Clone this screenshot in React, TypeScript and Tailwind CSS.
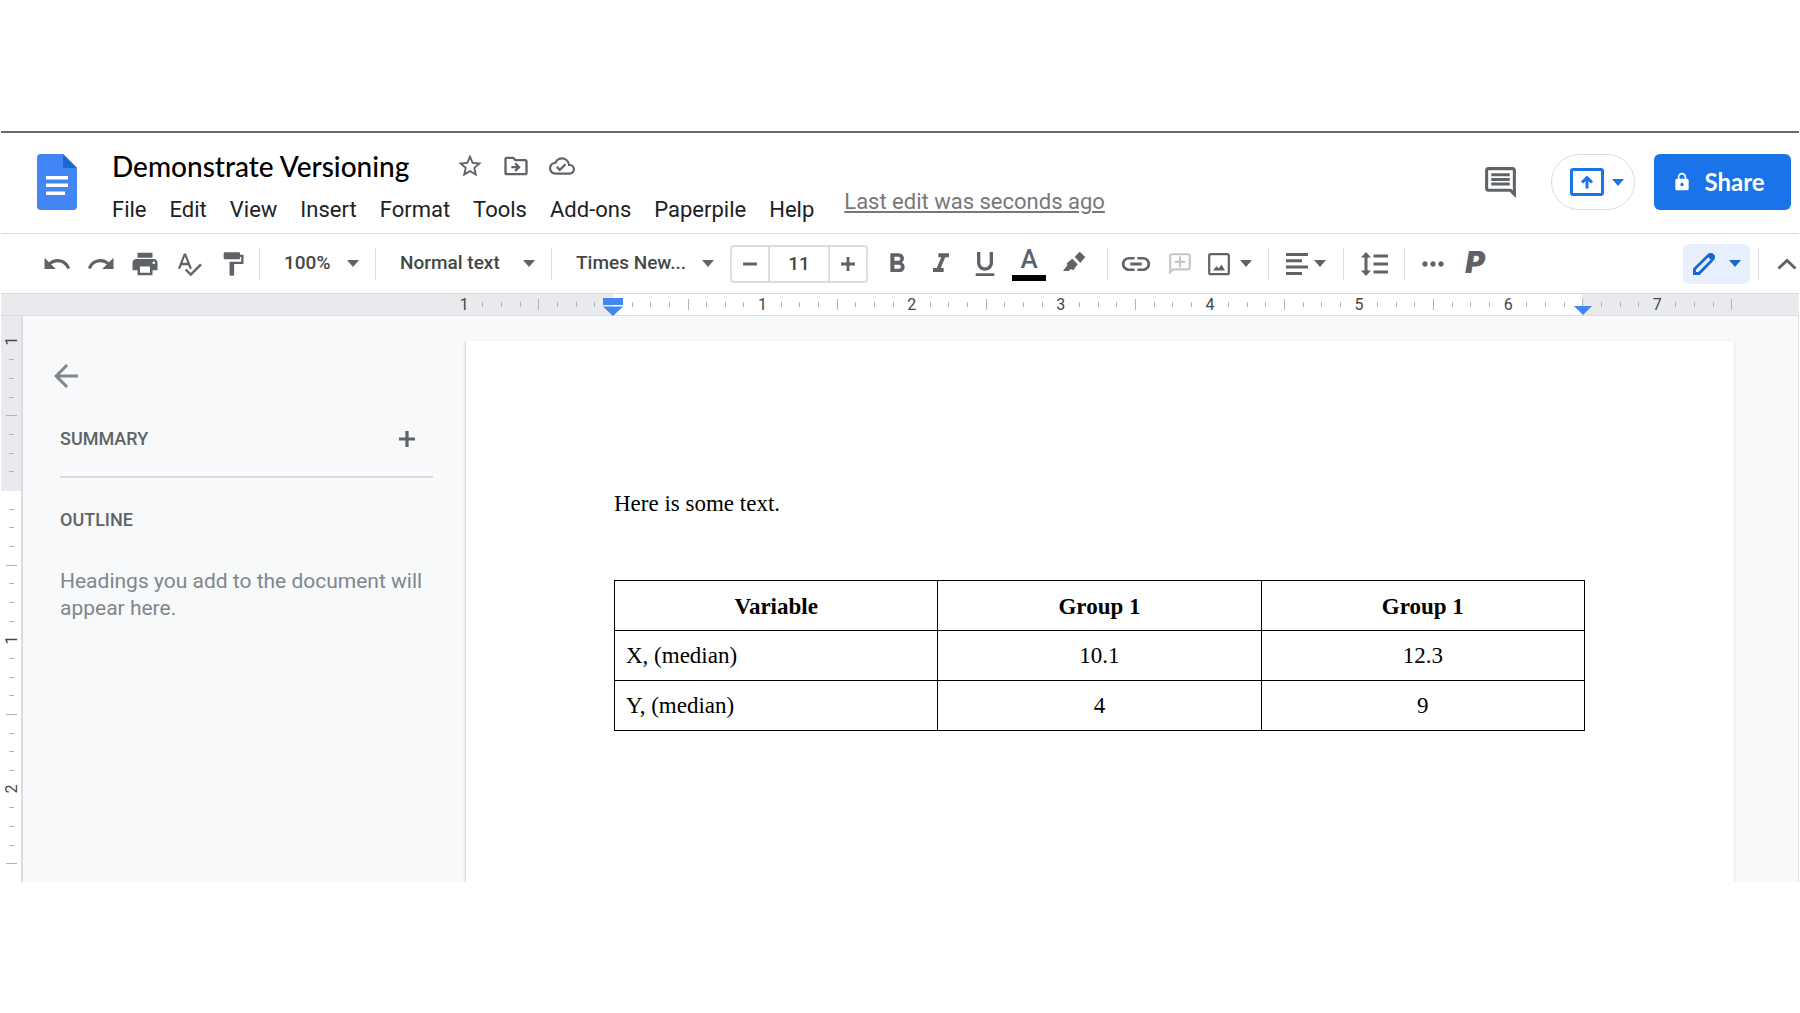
import type { ReactNode, SVGProps } from 'react';
import {
    MdArrowBack,
    MdFormatBold,
    MdFormatItalic,
    MdFormatPaint,
    MdFormatUnderlined,
    MdLink,
    MdLock,
    MdMoreHoriz,
    MdOutlineAddComment,
    MdOutlineCloudDone,
    MdOutlineComment,
    MdOutlineDriveFileMove,
    MdPrint,
    MdRedo,
    MdSpellcheck,
    MdStarBorder,
    MdUndo,
} from 'react-icons/md';

const menus = [
    'File',
    'Edit',
    'View',
    'Insert',
    'Format',
    'Tools',
    'Add-ons',
    'Paperpile',
    'Help',
];

const rows = [
    { variable: 'X, (median)', first: '10.1', second: '12.3' },
    { variable: 'Y, (median)', first: '4', second: '9' },
];

function Caret(props: SVGProps<SVGSVGElement>) {
    return (
        <svg width="12" height="7" viewBox="0 0 12 7" fill="currentColor" {...props}>
            <path d="M0 0h12L6 7z" />
        </svg>
    );
}

function Minus() {
    return (
        <svg width="14" height="14" viewBox="0 0 14 14" fill="currentColor">
            <path d="M0 5.500h14v3H0z" />
        </svg>
    );
}

function Plus({ size = 14 }: { size?: number }) {
    return (
        <svg width={size} height={size} viewBox="0 0 14 14" fill="currentColor">
            <path d="M5.600 0h2.800v5.600H14v2.800H8.400V14H5.600V8.400H0V5.600h5.600z" />
        </svg>
    );
}

function DocsLogo() {
    return (
        <svg width="40" height="56" viewBox="0 0 40 56">
            <path
                d="M4 0h22l14 14v38a4 4 0 0 1-4 4H4a4 4 0 0 1-4-4V4a4 4 0 0 1 4-4z"
                fill="#4285f4"
            />
            <path d="M26 0l14 14H26z" fill="#1967d2" />
            <path
                d="M9 22h22v3.500H9zM9 29.500h22V33H9zM9 37.500h19V41H9z"
                fill="#fff"
            />
        </svg>
    );
}

function Divider() {
    return <div className="mx-1 h-8 w-px shrink-0 bg-[#dadce0]" />;
}

function ToolButton({
    label,
    children,
    className = 'w-11',
}: {
    label: string;
    children: ReactNode;
    className?: string;
}) {
    return (
        <button
            type="button"
            aria-label={label}
            className={`flex h-10 shrink-0 items-center justify-center ${className}`}
        >
            {children}
        </button>
    );
}

function Dropdown({
    label,
    value,
    className,
}: {
    label: string;
    value: string;
    className: string;
}) {
    return (
        <div className={`relative flex shrink-0 items-center ${className}`}>
            <select
                aria-label={label}
                className="h-10 w-full appearance-none pl-5 text-[19px] font-medium text-[#444746]"
            >
                <option>{value}</option>
            </select>
            <Caret className="pointer-events-none absolute right-3" />
        </div>
    );
}

// One cell per eighth of an inch, starting one inch before the margin.
function RulerCell({
    index,
    vertical = false,
}: {
    index: number;
    vertical?: boolean;
}) {
    const eighth = index - 8;
    const isMajor = eighth % 4 === 0;

    if (eighth === 0) {
        return null;
    }
    if (eighth % 8 === 0) {
        return (
            <span
                className={`text-base leading-none text-[#444746] ${vertical ? '-rotate-90' : ''}`}
            >
                {Math.abs(eighth / 8)}
            </span>
        );
    }
    if (vertical) {
        return (
            <span
                className={`h-px bg-[#b0b4b9] ${isMajor ? 'w-[11px]' : 'w-[5px]'}`}
            />
        );
    }
    return (
        <span
            className={`w-px bg-[#b0b4b9] ${isMajor ? 'h-[11px]' : 'h-[5px]'}`}
        />
    );
}

function HorizontalRuler() {
    const background = (index: number) => {
        if (index === 8) {
            return 'bg-[linear-gradient(to_right,#e8eaed_50%,#fff_50%)]';
        }
        if (index === 60) {
            return 'bg-[linear-gradient(to_right,#fff_50%,#e8eaed_50%)]';
        }
        return index > 8 && index < 60 ? 'bg-white' : '';
    };

    return (
        <div className="flex h-[23px] border-y border-[#dadce0] bg-[#e8eaed] pr-[58px] pl-[454px]">
            {Array.from({ length: 69 }, (_, index) => (
                <div
                    key={index}
                    className={`relative flex min-w-0 flex-1 items-center justify-center ${background(index)}`}
                >
                    <RulerCell index={index} />
                    {index === 8 && (
                        <svg
                            className="absolute top-1 z-10"
                            width="20"
                            height="18"
                            viewBox="0 0 20 18"
                            fill="#4285f4"
                        >
                            <path d="M0 0h20v7H0zM0 8.500h20L10 18z" />
                        </svg>
                    )}
                    {index === 60 && (
                        <svg
                            className="absolute top-3 z-10"
                            width="18"
                            height="9"
                            viewBox="0 0 18 9"
                            fill="#4285f4"
                        >
                            <path d="M0 0h18L9 9z" />
                        </svg>
                    )}
                </div>
            ))}
        </div>
    );
}

function VerticalRuler() {
    return (
        <div className="flex w-[22px] shrink-0 flex-col border-r-2 border-[#dadce0] bg-[linear-gradient(to_bottom,#e8eaed_175px,#fff_175px)] pt-4 pb-[9px] pl-px">
            {Array.from({ length: 29 }, (_, index) => (
                <div
                    key={index}
                    className="flex min-h-0 flex-1 items-center justify-center"
                >
                    <RulerCell index={index} vertical />
                </div>
            ))}
        </div>
    );
}

function Header() {
    return (
        <header className="flex h-[101px] items-start border-b border-[#dadce0] pt-[21px] pr-2 pl-9">
            <DocsLogo />
            <div className="ml-[35px]">
                <div className="flex h-6 items-center">
                    <h1 className="font-['Lato'] text-[28px] font-medium text-black">
                        Demonstrate Versioning
                    </h1>
                    <div className="ml-[38px] flex text-[#5f6368]">
                        <ToolButton label="Star" className="w-[46px]">
                            <MdStarBorder size={28} />
                        </ToolButton>
                        <ToolButton label="Move" className="w-[46px]">
                            <MdOutlineDriveFileMove size={28} />
                        </ToolButton>
                        <ToolButton label="Document status" className="w-[46px]">
                            <MdOutlineCloudDone size={26} />
                        </ToolButton>
                    </div>
                </div>
                <div className="flex items-start">
                    <nav className="flex gap-[23px] pt-[18px] text-[22px] leading-7 text-[#202124]">
                        {menus.map((menu) => (
                            <button key={menu} type="button">
                                {menu}
                            </button>
                        ))}
                    </nav>
                    <a
                        href="#history"
                        className="ml-[30px] pt-[10px] text-[22px] leading-7 text-[#777] underline"
                    >
                        Last edit was seconds ago
                    </a>
                </div>
            </div>
            <div className="ml-auto flex items-center">
                <ToolButton label="Open comment history">
                    <MdOutlineComment size={37} className="text-[#5f6368]" />
                </ToolButton>
                <button
                    type="button"
                    aria-label="Present to a meeting"
                    className="ml-[29px] flex h-14 w-[84px] items-center justify-center gap-2 rounded-full border border-[#dadce0] pl-2 text-[#1a73e8]"
                >
                    <svg width="34" height="28" viewBox="0 0 34 28" fill="none">
                        <rect
                            x="1.500"
                            y="1.500"
                            width="31"
                            height="25"
                            rx="1.500"
                            stroke="currentColor"
                            strokeWidth="3"
                        />
                        <path
                            d="M17 20.500v-10M12 14.500l5-5 5 5"
                            stroke="currentColor"
                            strokeWidth="3"
                        />
                    </svg>
                    <Caret />
                </button>
                <button
                    type="button"
                    className="ml-[19px] flex h-14 w-[137px] items-center justify-center gap-3 rounded-md bg-[#1a73e8] pr-2 font-['Lato'] text-2xl font-bold text-white"
                >
                    <MdLock size={20} />
                    Share
                </button>
            </div>
        </header>
    );
}

function Toolbar() {
    return (
        <div className="flex h-[59px] items-center pl-[34px] text-[#5f6368]">
            <ToolButton label="Undo">
                <MdUndo size={30} />
            </ToolButton>
            <ToolButton label="Redo">
                <MdRedo size={30} />
            </ToolButton>
            <ToolButton label="Print">
                <MdPrint size={30} />
            </ToolButton>
            <ToolButton label="Spelling and grammar check">
                <MdSpellcheck size={28} />
            </ToolButton>
            <ToolButton label="Paint format">
                <MdFormatPaint size={28} />
            </ToolButton>
            <Divider />
            <Dropdown label="Zoom" value="100%" className="w-[107px]" />
            <Divider />
            <Dropdown label="Styles" value="Normal text" className="w-[167px]" />
            <Divider />
            <Dropdown label="Font" value="Times New..." className="w-[170px]" />
            <div className="ml-1 flex h-[38px] shrink-0 items-center rounded border-2 border-[#dadce0]">
                <ToolButton label="Decrease font size" className="w-9">
                    <Minus />
                </ToolButton>
                <input
                    aria-label="Font size"
                    defaultValue="11"
                    className="h-full w-[62px] border-x-2 border-[#dadce0] text-center text-[19px] font-medium text-[#444746]"
                />
                <ToolButton label="Increase font size" className="w-9">
                    <Plus />
                </ToolButton>
            </div>
            <div className="mr-1 ml-[7px] flex">
                <ToolButton label="Bold">
                    <MdFormatBold size={32} />
                </ToolButton>
                <ToolButton label="Italic">
                    <MdFormatItalic size={32} />
                </ToolButton>
                <ToolButton label="Underline">
                    <MdFormatUnderlined size={32} />
                </ToolButton>
                <ToolButton label="Text color" className="w-11 flex-col gap-1">
                    <span className="text-[26px] leading-6 font-medium">A</span>
                    <span className="h-[6px] w-[34px] bg-black" />
                </ToolButton>
                <ToolButton label="Highlight color" className="w-12">
                    <svg width="24" height="26" viewBox="0 0 24 26" fill="currentColor">
                        <path d="M16.700 .700l5.600 5.300-5 6-5.600-6.300zM9.300 7.700l5.400 5.600-4.400 6-2.600-1.300-2 2H0l4.300-5.700L4 12z" />
                    </svg>
                </ToolButton>
            </div>
            <Divider />
            <ToolButton label="Insert link" className="w-12">
                <MdLink size={34} />
            </ToolButton>
            <ToolButton label="Add comment" className="w-10">
                <MdOutlineAddComment size={26} className="-scale-x-100 text-[#c4c7c5]" />
            </ToolButton>
            <ToolButton label="Insert image" className="w-16 gap-[10px] pr-1">
                <svg width="22" height="24" viewBox="0 0 22 24" fill="none">
                    <rect
                        x="1.200"
                        y="2.200"
                        width="19.600"
                        height="20"
                        rx="1.500"
                        stroke="currentColor"
                        strokeWidth="2.200"
                    />
                    <path
                        d="M5 18.500l3.500-4.500 2 2.500 3-4 3.500 6z"
                        fill="currentColor"
                    />
                </svg>
                <Caret />
            </ToolButton>
            <Divider />
            <ToolButton label="Align" className="w-[66px] gap-[6px]">
                <svg width="22" height="22" viewBox="0 0 22 22" fill="currentColor">
                    <path d="M0 0h22v3H0zM0 6.300h16v3H0zM0 12.600h22v3H0zM0 19h16v3H0z" />
                </svg>
                <Caret />
            </ToolButton>
            <Divider />
            <ToolButton label="Line spacing" className="w-[52px]">
                <svg width="27" height="24" viewBox="0 0 27 24" fill="currentColor">
                    <path d="M5 0l5 5.500H6.500v13H10L5 24l-5-5.500h3.500v-13H0zM12.500 2.500H27v3H12.500zM12.500 10.500H27v3H12.500zM12.500 18.500H27v3H12.500z" />
                </svg>
            </ToolButton>
            <Divider />
            <ToolButton label="More" className="w-12">
                <MdMoreHoriz size={32} />
            </ToolButton>
            <ToolButton label="Paperpile" className="w-9 pb-1">
                <span className="font-['Inter'] text-3xl leading-8 font-black italic">
                    P
                </span>
            </ToolButton>
            <button
                type="button"
                aria-label="Editing mode"
                className="mr-1 ml-auto flex h-10 w-[67px] shrink-0 items-center justify-center gap-[14px] rounded-md bg-[#e8f0fe] text-[#1967d2]"
            >
                <svg width="22" height="22" viewBox="0 0 22 22" fill="none">
                    <path
                        d="M1.500 20.500v-4.500L15.500 2.200a2.600 2.600 0 0 1 4.200 4.300L6 20.500z"
                        stroke="currentColor"
                        strokeWidth="2.800"
                    />
                    <path
                        d="M14 3l3-2.500h2.500l2 2V5l-2.500 3zM0 17l5 5H0z"
                        fill="currentColor"
                    />
                </svg>
                <Caret />
            </button>
            <Divider />
            <ToolButton label="Hide the menus" className="w-9 pl-3">
                <svg width="20" height="12" viewBox="0 0 20 12" fill="none">
                    <path
                        d="M1.500 10.500L10 2.500l8.500 8"
                        stroke="currentColor"
                        strokeWidth="3"
                    />
                </svg>
            </ToolButton>
        </div>
    );
}

function OutlinePanel() {
    return (
        <aside className="w-[442px] shrink-0 pt-[42px] pr-8 pl-[37px]">
            <button
                type="button"
                aria-label="Close document outline"
                className="-ml-3 block text-[#80868b]"
            >
                <MdArrowBack size={36} />
            </button>
            <div className="mt-[23px] flex h-11 items-center justify-between pr-[18px] text-[#5f6368]">
                <h2 className="text-lg font-medium">SUMMARY</h2>
                <button type="button" aria-label="Add summary">
                    <Plus size={16} />
                </button>
            </div>
            <hr className="mt-[15px] border-t-2 border-[#dadce0]" />
            <h2 className="mt-7 text-lg font-medium text-[#5f6368]">OUTLINE</h2>
            <p className="mt-[34px] text-[21px] leading-[27px] text-[#80868b]">
                Headings you add to the document will appear here.
            </p>
        </aside>
    );
}

function DocumentPage() {
    return (
        <main className="mt-[25px] min-w-0 flex-1 border-l border-[#dadce0] bg-white pt-[148px] pr-[149px] pl-[148px] font-['Liberation_Serif'] text-[23px] leading-[30px] text-black shadow">
            <p>Here is some text.</p>
            <table className="mt-[61px] w-full table-fixed border-collapse text-center">
                <thead>
                    <tr className="h-[50px]">
                        <th className="border border-black pt-[2px]">Variable</th>
                        <th className="border border-black pt-[2px]">Group 1</th>
                        <th className="border border-black pt-[2px]">Group 1</th>
                    </tr>
                </thead>
                <tbody>
                    {rows.map((row) => (
                        <tr key={row.variable} className="h-[50px]">
                            <td className="border border-black px-[11px] text-left">
                                {row.variable}
                            </td>
                            <td className="border border-black">{row.first}</td>
                            <td className="border border-black">{row.second}</td>
                        </tr>
                    ))}
                </tbody>
            </table>
        </main>
    );
}

export default function App() {
    return (
        <div className="min-h-screen bg-white pt-[131px] pr-px pl-px font-['Roboto',sans-serif]">
            <div className="border-t-2 border-[#6b6b6b]">
                <Header />
                <Toolbar />
                <HorizontalRuler />
                <div className="flex min-h-[566px] overflow-hidden border-r border-[#dadce0] bg-[#f8f9fa]">
                    <VerticalRuler />
                    <OutlinePanel />
                    <DocumentPage />
                    <div className="w-16 shrink-0" />
                </div>
            </div>
        </div>
    );
}
